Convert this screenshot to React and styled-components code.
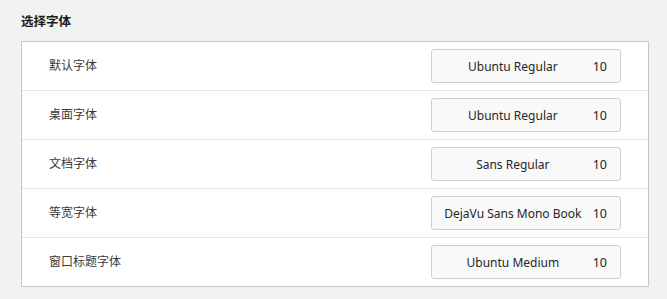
import React from "react";
import styled, { createGlobalStyle } from "styled-components";

const Global = createGlobalStyle`
  html, body { margin: 0; padding: 0; background: #f2f2f2; }
  body { font-family: "Noto Sans", "Noto Sans CJK SC", sans-serif; color: #303030; }
`;

const Page = styled.div`
  padding: 13px 18px 0 21px;
  width: 667px;
  box-sizing: border-box;
`;

const Title = styled.div`
  font-size: 12.5px;
  font-weight: 700;
  color: #1a1a1a;
  line-height: 18px;
  height: 28px;
`;

const Panel = styled.div`
  border: 1px solid #c6c6c6;
  background: #fff;
  width: 628px;
  box-sizing: border-box;
`;

const Row = styled.div`
  display: flex;
  align-items: center;
  justify-content: space-between;
  height: 49px;
  box-sizing: border-box;
  padding: 0 27px 0 27px;
  border-top: ${(p) => (p.$first ? "none" : "1px solid #e3e3e3")};
  ${(p) => p.$first && "height: 48px;"}
`;

const Label = styled.span`
  font-size: 12px;
  line-height: 16px;
  color: #3a3a3a;
`;

const FontButton = styled.div`
  display: flex;
  align-items: center;
  width: 190px;
  height: 34px;
  box-sizing: border-box;
  border: 1px solid #cfcfcf;
  border-radius: 3px;
  background: #f9f9f9;
  padding: 0 13px 0 10px;
  font-size: 12px;
  color: #262626;
`;

const FontName = styled.span`
  flex: 1;
  text-align: center;
  white-space: nowrap;
`;

const FontSize = styled.span`
  margin-left: 9px;
  font-size: 12.5px;
`;

const rows = [
  ["默认字体", "Ubuntu Regular"],
  ["桌面字体", "Ubuntu Regular"],
  ["文档字体", "Sans Regular"],
  ["等宽字体", "DejaVu Sans Mono Book"],
  ["窗口标题字体", "Ubuntu Medium"],
];

export default function App() {
  return (
    <Page>
      <Global />
      <Title>选择字体</Title>
      <Panel>
        {rows.map(([label, font], i) => (
          <Row key={label} $first={i === 0}>
            <Label>{label}</Label>
            <FontButton>
              <FontName>{font}</FontName>
              <FontSize>10</FontSize>
            </FontButton>
          </Row>
        ))}
      </Panel>
    </Page>
  );
}
